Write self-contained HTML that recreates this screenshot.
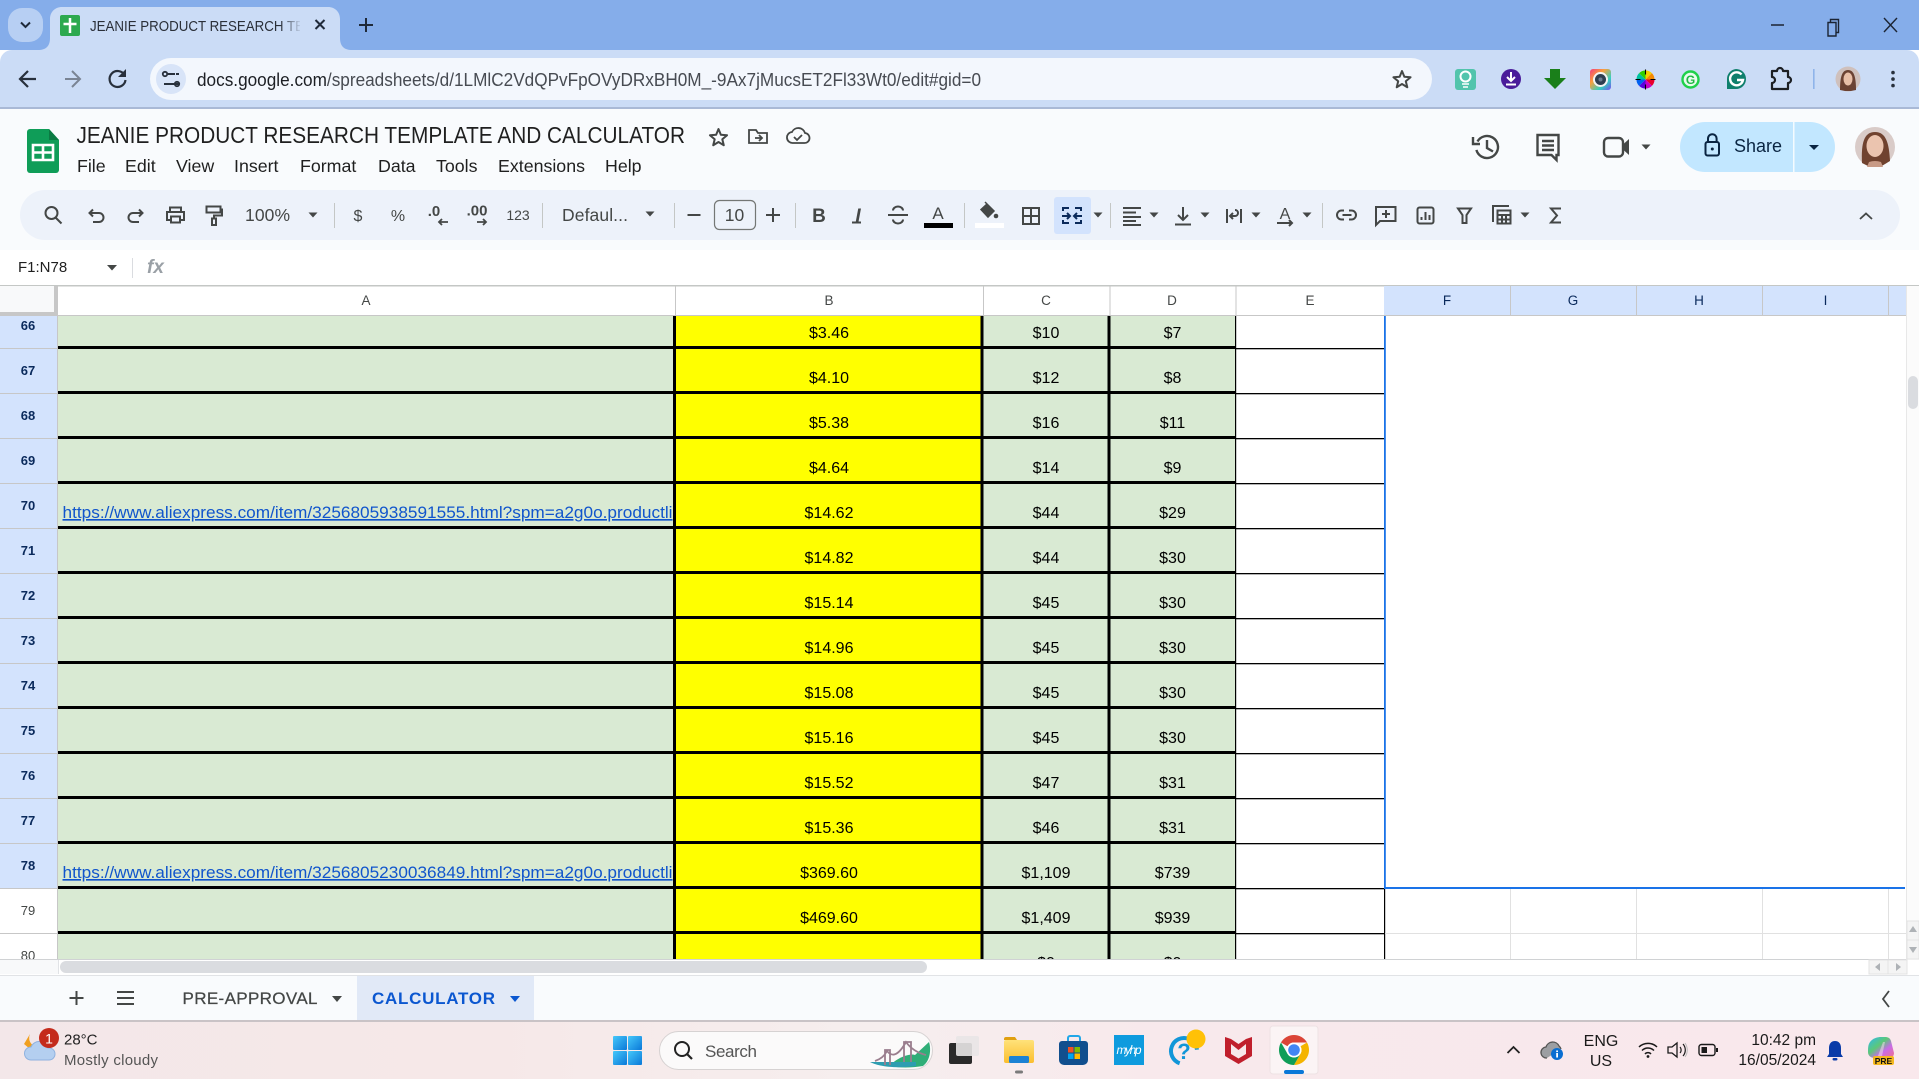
<!DOCTYPE html>
<html lang="en"><head><meta charset="utf-8"><title>JEANIE PRODUCT RESEARCH TEMPLATE AND CALCULATOR</title>
<style>
html,body{margin:0;padding:0;width:1919px;height:1079px;overflow:hidden;background:#fff}
#p{position:relative;width:1919px;height:1079px;overflow:hidden;font-family:"Liberation Sans",sans-serif}
#p>div{position:absolute}
svg{position:absolute;left:0;top:0}
text{font-family:"Liberation Sans",sans-serif}
</style></head><body><div id="p">
<div style="left:0;top:0;width:1919px;height:50px;background:#85ADEA"></div>
<div style="left:0;top:50px;width:1919px;height:58px;background:#CBDCF6;border-radius:12px 12px 0 0"></div>
<div style="left:0;top:107px;width:1919px;height:2px;background:#A9B9D6"></div>
<div style="left:150px;top:58px;width:1282px;height:42px;background:#F3F7FD;border-radius:21px"></div>
<div style="left:0;top:109px;width:1919px;height:141px;background:#F9FBFD"></div>
<div style="left:20px;top:190px;width:1880px;height:50px;background:#EDF2FA;border-radius:25px"></div>
<div style="left:0;top:250px;width:1919px;height:35px;background:#fff"></div>
<div style="left:0;top:975px;width:1919px;height:45px;background:#F9FBFD;border-top:1px solid #E1E3E6;box-sizing:border-box"></div>
<div style="left:0;top:1020px;width:1919px;height:59px;background:linear-gradient(90deg,#F3E7E9 0%,#F6E8E8 25%,#F6EEEE 45%,#F8E9EC 60%,#F9E8EC 100%);border-top:2px solid #C9C3C6;box-sizing:border-box"></div>
<svg width="1919" height="1079" viewBox="0 0 1919 1079">
<defs>
<clipPath id="grid"><rect x="0" y="316" width="1906" height="643"/></clipPath>
<clipPath id="tabc"><rect x="88" y="10" width="212" height="30"/></clipPath>
<linearGradient id="fade" x1="0" x2="1"><stop offset="0" stop-color="#CBDCF6" stop-opacity="0"/><stop offset="1" stop-color="#CBDCF6"/></linearGradient>
<linearGradient id="ring" x1="0" x2="1" y1="0" y2="1"><stop offset="0" stop-color="#F43C7E"/><stop offset=".35" stop-color="#F9A03C"/><stop offset=".7" stop-color="#35D0C0"/><stop offset="1" stop-color="#7A4CF0"/></linearGradient>
<linearGradient id="win" x1="0" x2="1" y1="0" y2="1"><stop offset="0" stop-color="#45C8FA"/><stop offset="1" stop-color="#0A78D8"/></linearGradient>
<linearGradient id="folder" x1="0" x2="0" y1="0" y2="1"><stop offset="0" stop-color="#FFE27A"/><stop offset="1" stop-color="#FBBE2E"/></linearGradient>
<linearGradient id="cop" x1="0" x2="1" y1="0" y2="1"><stop offset="0" stop-color="#2FB8F0"/><stop offset=".4" stop-color="#5CC878"/><stop offset=".65" stop-color="#C86CE8"/><stop offset="1" stop-color="#F0708C"/></linearGradient>
<polygon id="star" points="0,-9 2.35,-3.24 8.56,-2.78 3.8,1.24 5.29,7.28 0,4 -5.29,7.28 -3.8,1.24 -8.56,-2.78 -2.35,-3.24" fill="none" stroke="#444746" stroke-width="2" stroke-linejoin="round"/>
<polygon id="tri" points="-4.5,-2.5 4.5,-2.5 0,2.5" fill="#444746"/>
</defs>

<!-- tab strip -->
<rect x="8" y="8" width="35" height="34" rx="14" fill="#B7CFF3"/>
<path d="M21 22.5l4.5 4.5 4.5-4.5" fill="none" stroke="#1F2A3A" stroke-width="2"/>
<path d="M38 50c8 0 12-4 12-12V19c0-7 5-12 12-12h266c7 0 12 5 12 12v19c0 8 4 12 12 12z" fill="#CBDCF6"/>
<rect x="60" y="15" width="20" height="21" rx="2" fill="#2DA94F"/>
<path d="M70 18v15M63.5 24h13" stroke="#fff" stroke-width="2.5"/>
<text x="90" y="31" font-size="15" fill="#2A2F38" textLength="214" lengthAdjust="spacingAndGlyphs" clip-path="url(#tabc)">JEANIE PRODUCT RESEARCH TE</text>
<rect x="280" y="12" width="22" height="26" fill="url(#fade)"/>
<path d="M315.5 20l9 9M324.5 20l-9 9" stroke="#1F2A3A" stroke-width="2"/>
<path d="M366 18v14M359 25h14" stroke="#1F2A3A" stroke-width="2"/>
<path d="M1771 25h13" stroke="#1B2433" stroke-width="1.5"/>
<path d="M1828 22.500h8v13.500h-8zM1830.500 22v-2.500h8v13h-2.500" fill="none" stroke="#1B2433" stroke-width="1.400"/>
<path d="M1884 18l13 14M1897 18l-13 14" stroke="#1B2433" stroke-width="1.4"/>

<!-- nav -->
<path d="M36 79H21M28 71l-8 8 8 8" fill="none" stroke="#28303C" stroke-width="2.2"/>
<path d="M65 79h14M72 71l8 8-8 8" fill="none" stroke="#7A8494" stroke-width="2"/>
<path d="M124.5 75a8 8 0 1 0 1 5" fill="none" stroke="#28303C" stroke-width="2.2"/><path d="M126 69v8h-8z" fill="#28303C"/>
<circle cx="171" cy="79" r="15" fill="#D8E4F8"/>
<path d="M167 74h8M171 84h8" stroke="#28303C" stroke-width="2"/><circle cx="165" cy="74" r="2.2" fill="none" stroke="#28303C" stroke-width="1.8"/><circle cx="177" cy="84" r="2.2" fill="none" stroke="#28303C" stroke-width="1.8"/><path d="M164 84h7M176 74h3" stroke="#28303C" stroke-width="2"/>
<text x="197" y="86" font-size="18" fill="#474B52" textLength="784" lengthAdjust="spacingAndGlyphs"><tspan fill="#1C1F24">docs.google.com</tspan>/spreadsheets/d/1LMlC2VdQPvFpOVyDRxBH0M_-9Ax7jMucsET2Fl33Wt0/edit#gid=0</text>
<use href="#star" x="1402" y="80"/>

<!-- extensions -->
<rect x="1455" y="69" width="21" height="21" rx="3" fill="#52C4AC"/><circle cx="1465.5" cy="76.5" r="5" fill="none" stroke="#fff" stroke-width="2"/><path d="M1462 84h7M1463 87h5" stroke="#fff" stroke-width="1.4"/>
<circle cx="1511" cy="79" r="10" fill="#4A1C9A"/><path d="M1511 72v8M1507 77l4 4 4-4M1506 84.5h10" stroke="#fff" stroke-width="2" fill="none"/>
<path d="M1550 69h10v9h6l-11 11-11-11h6z" fill="#1A7F1A"/>
<rect x="1590" y="69" width="21" height="21" rx="3" fill="url(#ring)"/><circle cx="1600.5" cy="79.5" r="7.5" fill="#F4F4F4"/><circle cx="1600.5" cy="79.5" r="5.5" fill="#2E3E50"/><circle cx="1600.5" cy="79.5" r="2" fill="#6B7C90"/>
<g transform="translate(1645.5 79.5)"><path d="M0 0V-9A9 9 0 0 1 6.4-6.4z" fill="#F5D000"/><path d="M0 0L6.4-6.4A9 9 0 0 1 9 0z" fill="#F58A00"/><path d="M0 0H9A9 9 0 0 1 6.4 6.4z" fill="#E8002C"/><path d="M0 0L6.4 6.4A9 9 0 0 1 0 9z" fill="#C800C8"/><path d="M0 0V9A9 9 0 0 1-6.4 6.4z" fill="#5A00E0"/><path d="M0 0L-6.4 6.4A9 9 0 0 1-9 0z" fill="#0060F0"/><path d="M0 0H-9A9 9 0 0 1-6.4-6.4z" fill="#00C0A0"/><path d="M0 0L-6.4-6.4A9 9 0 0 1 0-9z" fill="#30D000"/><path d="M0-10v5M0 5v5M-10 0h5M5 0h5" stroke="#000" stroke-width="1.1"/></g>
<circle cx="1690.5" cy="79.5" r="8" fill="#E9FBEE" stroke="#1FD14A" stroke-width="2.4"/><text x="1690.5" y="84" font-size="12" font-weight="700" fill="#1FB844" text-anchor="middle">G</text>
<path d="M1736 69a10 10 0 1 1 0 20h-9v-10a10 10 0 0 1 9-10z" fill="#0F7F6C"/><path d="M1741.5 74.5a6.5 6.5 0 1 0 1.5 5.5h-6" fill="none" stroke="#fff" stroke-width="2.4"/>
<path d="M1772 71h5a3 3 0 0 1 6 0h5v6a2.5 2.5 0 0 1 0 6v6h-16v-6a2.6 2.6 0 0 0 0-6z" fill="none" stroke="#1C1F24" stroke-width="2.2" stroke-linejoin="round"/>
<rect x="1813" y="69" width="1.6" height="20" fill="#8FB4EA"/>
<g transform="translate(1848 79)"><circle r="12.5" fill="#CFC0BC"/><path d="M-8 11C-8-2-6-9 0-9S8-2 8 11L3 12H-3Z" fill="#6B4233"/><ellipse cy="0" rx="4.500" ry="6.500" fill="#E8BFA8"/></g>
<path d="M1893 72.5v.1M1893 79v.1M1893 85.5v.1" stroke="#28303C" stroke-width="3.6" stroke-linecap="round"/>

<!-- sheets header -->
<path d="M30 129h19l10 11v30a3 3 0 0 1-3 3H30a3 3 0 0 1-3-3v-38a3 3 0 0 1 3-3z" fill="#0F9D58"/><path d="M49 129l10 11H49z" fill="#0B7A43"/>
<path d="M33 145h20v15H33zM43 145v15M33 152.500h20" fill="none" stroke="#fff" stroke-width="2.6"/>
<text x="76.500" y="143" font-size="23" fill="#1F1F1F" textLength="608.500" lengthAdjust="spacingAndGlyphs">JEANIE PRODUCT RESEARCH TEMPLATE AND CALCULATOR</text>
<g font-size="17.800" fill="#1F1F1F"><text x="77" y="172">File</text><text x="125" y="172">Edit</text><text x="176" y="172">View</text><text x="234" y="172">Insert</text><text x="300" y="172">Format</text><text x="378" y="172">Data</text><text x="436" y="172">Tools</text><text x="498" y="172">Extensions</text><text x="605" y="172">Help</text></g>
<use href="#star" x="718.500" y="138"/>
<path d="M749 130h7l2 3h9v10h-18zM755 138h7M759 135l3 3-3 3" fill="none" stroke="#444746" stroke-width="1.8"/>
<path d="M793 143h11a5 5 0 0 0 1-10 7 7 0 0 0-13-1 5.500 5.500 0 0 0 1 11zM794 137l3 3 5-5" fill="none" stroke="#444746" stroke-width="1.8"/>
<circle cx="1487" cy="147" r="11" fill="none" stroke="#444746" stroke-width="2.4" stroke-dasharray="60 10" transform="rotate(-150 1487 147)"/><path d="M1487 140v8l6 3.500M1473 137v7h7" fill="none" stroke="#444746" stroke-width="2.400"/>
<path d="M1537.500 135h21v20h-2v5l-5-5h-14zM1542 141h12M1542 145.500h12M1542 150h12" fill="none" stroke="#444746" stroke-width="2.400"/>
<rect x="1604" y="138" width="19" height="18.500" rx="4" fill="none" stroke="#444746" stroke-width="2.400"/><path d="M1623 144.500l6-5.500v16l-6-5.500z" fill="#444746"/>
<use href="#tri" x="1646" y="147"/>
<rect x="1680" y="122" width="155" height="50" rx="25" fill="#C2E7FF"/><rect x="1793" y="122" width="1.500" height="50" fill="#F4FBFF"/>
<rect x="1705.500" y="142" width="13.500" height="13.500" rx="2" fill="none" stroke="#0A2542" stroke-width="2"/><path d="M1708 142v-3.500a4.300 4.300 0 0 1 8.600 0v3.500" fill="none" stroke="#0A2542" stroke-width="2"/><circle cx="1712.300" cy="149" r="1.500" fill="#0A2542"/>
<text x="1734" y="152" font-size="18" fill="#0A2542" textLength="48">Share</text>
<polygon points="1809,145 1819,145 1814,150" fill="#0A2542"/>
<g transform="translate(1875 147)"><circle r="20" fill="#D9CBC8"/><path d="M-13 16C-14-4-11-15 0-15S14-4 15 14L5 20H-5Z" fill="#70422F"/><ellipse cy="-1" rx="8.500" ry="11" fill="#EBC4AF"/><path d="M-6 15a12 7 0 0 1 12 0l2 5H-8z" fill="#C89A86"/></g>

<!-- toolbar -->
<g fill="none" stroke="#444746" stroke-width="2">
<circle cx="51.500" cy="213" r="6"/><path d="M55.500 217.500l6 6"/>
<path d="M93 209.500L89.500 213l3.500 3.500M90 213h9a4.500 4.500 0 0 1 0 9h-6"/>
<path d="M139 209.500l3.500 3.500-3.500 3.500M142 213h-9a4.500 4.500 0 0 0 0 9h6"/>
<path d="M170 212v-4.500h11v4.500M171 220h-4v-8h17v8h-4M171 216.500h9v6h-9z"/>
<path d="M206.500 206.500h14v6h-14zM220.500 209.500h1.500v6h-8v3M212 218.500h4v6.500h-4z"/>
<path d="M687.500 215h13M773 208v14M766 215h14M888 215h20M893 210.500a5 4 0 0 1 10 0M893 219.500a5 4 0 0 0 10 0"/>
<rect x="1023" y="208" width="16" height="16"/><path d="M1031 208v16M1023 216h16"/>
<path d="M1123 208h18M1123 212.500h13M1123 217h18M1123 221h13M1123 225h18"/>
<path d="M1183 207v13M1178 215l5 5 5-5M1175 224.500h16"/>
<path d="M1227 209v14M1241 209v14M1230 216h5a3 3 0 0 0 0-6M1233 213l-3 3 3 3"/>
<path d="M1277 223h15M1289 220l3 3-3 3"/>
<path d="M1344 210.500h-2.500a4.500 4.500 0 0 0 0 9h2.500M1349 210.500h2.500a4.500 4.500 0 0 1 0 9H1349M1342.500 215h9"/>
<path d="M1376 207h19.500v14H1380l-4 4zM1386 210v8M1382 214h8"/>
<rect x="1417.500" y="207.500" width="16" height="16" rx="2"/><path d="M1421.500 217v3M1425.500 212v8M1429.500 215v5"/>
<path d="M1458 208.500h13l-4.500 6.500v8h-4v-8z"/>
<path d="M1493 222v-16h16M1497.500 210.500h13v13h-13zM1497.500 215h13M1497.500 219.500h13M1502 215v8M1506 215v8"/>
<path d="M1561 208.500h-10l6 7-6 7h10"/>
<path d="M1860 219l6-5.500 6 5.500" stroke-width="1.800"/>
</g>
<g font-size="17.500" fill="#444746"><text x="245" y="221" textLength="45">100%</text><text x="358" y="221" text-anchor="middle" font-size="16">$</text><text x="398" y="221" text-anchor="middle" font-size="16">%</text><text x="562" y="221" textLength="66">Defaul...</text><text x="734.500" y="221" text-anchor="middle">10</text>
<text x="434" y="216" text-anchor="middle" font-size="15" font-weight="700">.0</text><text x="477" y="215.500" text-anchor="middle" font-size="15" font-weight="700">.00</text><text x="518" y="220" text-anchor="middle" font-size="14">123</text>
<text x="819" y="222" text-anchor="middle" font-size="19" font-weight="700">B</text><text x="858" y="222" text-anchor="middle" font-size="19" font-weight="700" font-style="italic">I</text><text x="938" y="219" text-anchor="middle" font-size="17">A</text><text x="1285" y="219" text-anchor="middle" font-size="16">A</text></g>
<path d="M852 222.500h9" stroke="#444746" stroke-width="2"/>
<path d="M448 222h-9M442 219l-3 3 3 3M477 222h9M483 219l3 3-3 3" fill="none" stroke="#444746" stroke-width="1.800"/>
<rect x="714.500" y="200.500" width="41" height="29" rx="5" fill="none" stroke="#747775" stroke-width="1.200"/>
<g fill="#C4C7C5"><rect x="334" y="203" width="1" height="25"/><rect x="542" y="203" width="1" height="25"/><rect x="674" y="203" width="1" height="25"/><rect x="795" y="203" width="1" height="25"/><rect x="964" y="203" width="1" height="25"/><rect x="1110" y="203" width="1" height="25"/><rect x="1322" y="203" width="1" height="25"/></g>
<rect x="924" y="223" width="29" height="5" fill="#000"/>
<path d="M985 202l2 2M981 209.500l6-5.500 7 7-6 6z" fill="#444746" stroke="#444746" stroke-width="1.500"/><circle cx="996" cy="216" r="2.300" fill="#444746"/>
<rect x="975" y="223" width="29" height="5" fill="#fff"/>
<rect x="1054" y="197" width="37" height="37" rx="3" fill="#D3E3FD"/>
<path d="M1063 211v-3h6M1081 211v-3h-6M1063 220v3h6M1081 220v3h-6M1062 216h8M1067 213l3 3-3 3M1082 216h-8M1077 213l-3 3 3 3" fill="none" stroke="#0B2A5B" stroke-width="2"/>
<use href="#tri" x="313" y="215"/><use href="#tri" x="650" y="214"/><use href="#tri" x="1098" y="215"/><use href="#tri" x="1154" y="215"/><use href="#tri" x="1205" y="215"/><use href="#tri" x="1256" y="215"/><use href="#tri" x="1307" y="215"/><use href="#tri" x="1525" y="215"/>

<!-- name box -->
<text x="18" y="272" font-size="15" fill="#1F1F1F">F1:N78</text>
<polygon points="107,265 117,265 112,270.500" fill="#444746"/>
<rect x="132" y="258" width="1" height="20" fill="#DADCE0"/>
<text x="147" y="273" font-family="Liberation Serif" font-size="19" font-style="italic" fill="#9AA0A6" font-weight="700">fx</text>

<!-- column headers -->
<rect x="0" y="285" width="1919" height="1.500" fill="#C4C7C5"/>
<rect x="0" y="286" width="54" height="26" fill="#F8F9FA"/><rect x="54" y="286" width="4" height="30" fill="#C7C7C7"/><rect x="0" y="312" width="58" height="4" fill="#C7C7C7"/>
<rect x="1384" y="286" width="522" height="29" fill="#D3E3FD"/>
<rect x="58" y="315" width="1848" height="1" fill="#C7C7C7"/>
<g fill="#C7C7C7"><rect x="675" y="286" width="1" height="29"/><rect x="983" y="286" width="1" height="29"/><rect x="1109.500" y="286" width="1" height="29"/><rect x="1235.500" y="286" width="1" height="29"/><rect x="1510" y="286" width="1" height="29"/><rect x="1636" y="286" width="1" height="29"/><rect x="1762" y="286" width="1" height="29"/><rect x="1888" y="286" width="1" height="29"/></g>
<g font-size="13.500" fill="#444746" text-anchor="middle"><text x="366" y="305">A</text><text x="829" y="305">B</text><text x="1046" y="305">C</text><text x="1172" y="305">D</text><text x="1310" y="305">E</text></g>
<g font-size="13.500" fill="#0A2A5C" text-anchor="middle"><text x="1447" y="305">F</text><text x="1573" y="305">G</text><text x="1699" y="305">H</text><text x="1825.500" y="305">I</text></g>

<!-- grid -->
<g clip-path="url(#grid)">
<rect x="0" y="316" width="58" height="573" fill="#D3E3FD"/>
<rect x="0" y="889" width="58" height="70" fill="#fff"/>
<rect x="57" y="316" width="1" height="643" fill="#C7C7C7"/>
<g fill="#C7C7C7"><rect x="0" y="348" width="58" height="1"/><rect x="0" y="393" width="58" height="1"/><rect x="0" y="438" width="58" height="1"/><rect x="0" y="483" width="58" height="1"/><rect x="0" y="528" width="58" height="1"/><rect x="0" y="573" width="58" height="1"/><rect x="0" y="618" width="58" height="1"/><rect x="0" y="663" width="58" height="1"/><rect x="0" y="708" width="58" height="1"/><rect x="0" y="753" width="58" height="1"/><rect x="0" y="798" width="58" height="1"/><rect x="0" y="843" width="58" height="1"/><rect x="0" y="888" width="58" height="1"/><rect x="0" y="933" width="58" height="1"/></g>
<rect x="58" y="316" width="615" height="643" fill="#D9EAD3"/>
<rect x="676" y="316" width="305" height="643" fill="#FFFF00"/>
<rect x="983" y="316" width="252.500" height="643" fill="#D9EAD3"/>
<g fill="#000"><rect x="1236" y="348" width="148" height="1.300"/><rect x="1236" y="393" width="148" height="1.300"/><rect x="1236" y="438" width="148" height="1.300"/><rect x="1236" y="483" width="148" height="1.300"/><rect x="1236" y="528" width="148" height="1.300"/><rect x="1236" y="573" width="148" height="1.300"/><rect x="1236" y="618" width="148" height="1.300"/><rect x="1236" y="663" width="148" height="1.300"/><rect x="1236" y="708" width="148" height="1.300"/><rect x="1236" y="753" width="148" height="1.300"/><rect x="1236" y="798" width="148" height="1.300"/><rect x="1236" y="843" width="148" height="1.300"/><rect x="1236" y="888" width="148" height="1.300"/><rect x="1236" y="933" width="148" height="1.300"/>
<rect x="1235" y="316" width="1.200" height="643"/><rect x="1384" y="889" width="1.200" height="70"/></g>
<g fill="#E1E1E1"><rect x="1385" y="933" width="521" height="1"/><rect x="1510" y="889" width="1" height="70"/><rect x="1636" y="889" width="1" height="70"/><rect x="1762" y="889" width="1" height="70"/><rect x="1888" y="889" width="1" height="70"/></g>
<g fill="#000"><rect x="58" y="346" width="1177" height="3"/><rect x="58" y="391" width="1177" height="3"/><rect x="58" y="436" width="1177" height="3"/><rect x="58" y="481" width="1177" height="3"/><rect x="58" y="526" width="1177" height="3"/><rect x="58" y="571" width="1177" height="3"/><rect x="58" y="616" width="1177" height="3"/><rect x="58" y="661" width="1177" height="3"/><rect x="58" y="706" width="1177" height="3"/><rect x="58" y="751" width="1177" height="3"/><rect x="58" y="796" width="1177" height="3"/><rect x="58" y="841" width="1177" height="3"/><rect x="58" y="886" width="1177" height="3"/><rect x="58" y="931" width="1177" height="3"/>
<rect x="673" y="316" width="3" height="643"/><rect x="980.500" y="316" width="3" height="643"/><rect x="1107.500" y="316" width="3" height="643"/></g>
<rect x="1384" y="316" width="1.800" height="572" fill="#1A73E8"/><rect x="1384" y="887" width="521" height="2" fill="#1A73E8"/>
<g font-size="13" font-weight="700" fill="#0A2A5C" text-anchor="middle"><text x="28" y="330">66</text><text x="28" y="375">67</text><text x="28" y="420">68</text><text x="28" y="465">69</text><text x="28" y="510">70</text><text x="28" y="555">71</text><text x="28" y="600">72</text><text x="28" y="645">73</text><text x="28" y="690">74</text><text x="28" y="735">75</text><text x="28" y="780">76</text><text x="28" y="825">77</text><text x="28" y="870">78</text></g>
<g font-size="13" fill="#444746" text-anchor="middle"><text x="28" y="915">79</text><text x="28" y="960">80</text></g>
<text x="62.500" y="518" font-size="16.500" fill="#1155CC" text-decoration="underline" textLength="610" lengthAdjust="spacingAndGlyphs">https://www.aliexpress.com/item/3256805938591555.html?spm=a2g0o.productli</text>
<text x="62.500" y="878" font-size="16.500" fill="#1155CC" text-decoration="underline" textLength="610" lengthAdjust="spacingAndGlyphs">https://www.aliexpress.com/item/3256805230036849.html?spm=a2g0o.productli</text>
<g font-size="16" fill="#000" text-anchor="middle">
<text x="829" y="338">$3.46</text><text x="1046" y="338">$10</text><text x="1172.500" y="338">$7</text>
<text x="829" y="383">$4.10</text><text x="1046" y="383">$12</text><text x="1172.500" y="383">$8</text>
<text x="829" y="428">$5.38</text><text x="1046" y="428">$16</text><text x="1172.500" y="428">$11</text>
<text x="829" y="473">$4.64</text><text x="1046" y="473">$14</text><text x="1172.500" y="473">$9</text>
<text x="829" y="518">$14.62</text><text x="1046" y="518">$44</text><text x="1172.500" y="518">$29</text>
<text x="829" y="563">$14.82</text><text x="1046" y="563">$44</text><text x="1172.500" y="563">$30</text>
<text x="829" y="608">$15.14</text><text x="1046" y="608">$45</text><text x="1172.500" y="608">$30</text>
<text x="829" y="653">$14.96</text><text x="1046" y="653">$45</text><text x="1172.500" y="653">$30</text>
<text x="829" y="698">$15.08</text><text x="1046" y="698">$45</text><text x="1172.500" y="698">$30</text>
<text x="829" y="743">$15.16</text><text x="1046" y="743">$45</text><text x="1172.500" y="743">$30</text>
<text x="829" y="788">$15.52</text><text x="1046" y="788">$47</text><text x="1172.500" y="788">$31</text>
<text x="829" y="833">$15.36</text><text x="1046" y="833">$46</text><text x="1172.500" y="833">$31</text>
<text x="829" y="878">$369.60</text><text x="1046" y="878">$1,109</text><text x="1172.500" y="878">$739</text>
<text x="829" y="923">$469.60</text><text x="1046" y="923">$1,409</text><text x="1172.500" y="923">$939</text>
<text x="1046" y="968">$0</text><text x="1172.500" y="968">$0</text>
</g>
</g>

<!-- scrollbars -->
<rect x="0" y="959" width="1919" height="1" fill="#D0D2D4"/>
<rect x="0" y="960" width="58" height="14" fill="#F8F9FA"/><rect x="58" y="960" width="1" height="14" fill="#E1E3E6"/>
<rect x="60" y="961" width="867" height="12" rx="6" fill="#DADCE0"/>
<rect x="1906" y="286" width="13" height="674" fill="#FBFBFB"/><rect x="1906" y="286" width="1" height="674" fill="#E8E8E8"/>
<rect x="1908" y="376" width="10" height="33" rx="5" fill="#DADCE0"/>
<rect x="1907" y="921" width="12" height="19" fill="#F4F4F4" stroke="#E3E3E3"/><rect x="1907" y="940" width="12" height="19" fill="#F4F4F4" stroke="#E3E3E3"/>
<polygon points="1913,926 1917,932 1909,932" fill="#AEB2B6"/><polygon points="1913,953 1917,947 1909,947" fill="#AEB2B6"/>
<rect x="1869" y="960" width="19" height="14" fill="#F4F4F4" stroke="#E3E3E3"/><rect x="1888" y="960" width="19" height="14" fill="#F4F4F4" stroke="#E3E3E3"/>
<polygon points="1875,967 1880,963 1880,971" fill="#AEB2B6"/><polygon points="1901,967 1896,963 1896,971" fill="#AEB2B6"/>

<!-- sheet tabs -->
<path d="M76.500 991v14M69.500 998h14" stroke="#444746" stroke-width="2"/>
<path d="M117 992h17M117 998h17M117 1004h17" stroke="#444746" stroke-width="2"/>
<text x="182.500" y="1004" font-size="17" fill="#444746" textLength="135" font-weight="400" stroke="#444746" stroke-width=".25">PRE-APPROVAL</text>
<polygon points="332,996 342,996 337,1002" fill="#444746"/>
<rect x="357" y="976" width="177" height="44" fill="#E1E9F7"/>
<text x="372" y="1004" font-size="17" font-weight="700" fill="#0B57D0" textLength="123">CALCULATOR</text>
<polygon points="510,996 520,996 515,1002" fill="#0B57D0"/>
<path d="M1889 991l-6 8 6 8" fill="none" stroke="#444746" stroke-width="1.800"/>

<!-- taskbar left -->
<path d="M30 1034a9 9 0 0 0 12 12l-12 3-6-5z" fill="#F0A020"/>
<path d="M31 1060a6.500 6.500 0 0 1 0-13 9 9 0 0 1 17 1 6 6 0 0 1 7 6 6 6 0 0 1-6 6z" fill="#B4CFF0" stroke="#8FB2E0" stroke-width="1"/>
<circle cx="49" cy="1038" r="10" fill="#C42B1C"/><text x="49" y="1043.500" font-size="14" fill="#fff" text-anchor="middle">1</text>
<text x="64" y="1044.500" font-size="15" fill="#1F1F1F">28°C</text>
<text x="64" y="1065" font-size="15" fill="#555" textLength="94">Mostly cloudy</text>
<!-- start -->
<g fill="url(#win)"><rect x="613" y="1036" width="14" height="14" rx="1"/><rect x="628" y="1036" width="14" height="14" rx="1"/><rect x="613" y="1051" width="14" height="14" rx="1"/><rect x="628" y="1051" width="14" height="14" rx="1"/></g>
<rect x="659.500" y="1031.500" width="273" height="38" rx="19" fill="#FBFAFA" stroke="#D6D2D2"/>
<circle cx="682" cy="1049" r="7" fill="none" stroke="#222" stroke-width="2"/><path d="M687 1054l5 5" stroke="#222" stroke-width="2.200"/>
<text x="705" y="1057" font-size="17" fill="#555" textLength="52">Search</text>
<!-- bridge -->
<path d="M890 1066c6-8 20-13 25-11l14-13c2 6 2 18-6 24-12 2-24 2-33 0z" fill="#30AE78"/>
<path d="M870 1062h46v4c-15 2-34 2-46-4z" fill="#2E9DB0"/>
<path d="M885 1065v-15h5v15M904 1062v-20h7v20M875 1061c6-2 10-6 12-10 4 5 10 7 19-9 5 7 12 11 20 13" fill="none" stroke="#9A7E8E" stroke-width="1.800"/>
<!-- task view -->
<rect x="949" y="1043" width="23" height="21" rx="2" fill="#2A2A2A"/><rect x="956" y="1036" width="23" height="20" rx="2" fill="#E8E6E6" opacity=".9"/>
<!-- explorer -->
<path d="M1004 1039a2 2 0 0 1 2-2h9l2 3h-13z" fill="#E0A010"/><rect x="1004" y="1040" width="30" height="23" rx="2" fill="url(#folder)"/><rect x="1009" y="1056" width="20" height="7" rx="1.500" fill="#1C82D4"/>
<rect x="1015" y="1070.500" width="8" height="3" rx="1.500" fill="#7A7A7A"/>
<!-- store -->
<path d="M1068 1042v-4a2 2 0 0 1 2-2h8a2 2 0 0 1 2 2v4" fill="none" stroke="#22A7E8" stroke-width="2"/>
<path d="M1059 1044a3 3 0 0 1 3-3h23a3 3 0 0 1 3 3v16a5 5 0 0 1-5 5h-19a5 5 0 0 1-5-5z" fill="#114F8E"/>
<rect x="1068" y="1047" width="5.500" height="5.500" fill="#F25022"/><rect x="1074.500" y="1047" width="5.500" height="5.500" fill="#7FBA00"/><rect x="1068" y="1053.500" width="5.500" height="5.500" fill="#00A4EF"/><rect x="1074.500" y="1053.500" width="5.500" height="5.500" fill="#FFB900"/>
<!-- myhp -->
<rect x="1114" y="1035" width="30" height="30" fill="#0E9BDE"/><text x="1129" y="1054" font-size="12" font-style="italic" fill="#fff" text-anchor="middle" textLength="25">myhp</text>
<!-- help -->
<circle cx="1184" cy="1051" r="13" fill="none" stroke="#1296D8" stroke-width="4" stroke-dasharray="55 26" transform="rotate(110 1184 1051)"/><text x="1184" y="1059" font-size="22" font-weight="700" fill="#1296D8" text-anchor="middle">?</text><circle cx="1196" cy="1039" r="9.500" fill="#FFC107"/>
<!-- mcafee -->
<path d="M1225 1037l6 2 7.500 5 7.500-5 6-2v19l-13.500 8-13.500-8z" fill="#C01F2C"/><path d="M1231 1044v10l7.500 4.500 7.500-4.500v-10l-7.500 6z" fill="#F7E7EA"/>
<!-- chrome -->
<rect x="1270" y="1026" width="48" height="48" rx="3" fill="#FBF4F5" stroke="#EEE2E4"/>
<g transform="translate(1294 1050)"><path d="M0-15A15 15 0 0 1 13 -7.500H0A7.500 7.500 0 0 0-6.500-3.700L-13-7.500A15 15 0 0 1 0-15z" fill="#DB4437"/><path d="M13-7.500A15 15 0 0 1 0 15L6.500 3.700A7.500 7.500 0 0 0 6.500-3.700z" fill="#F4B400"/><path d="M-13-7.500A15 15 0 0 0 0 15L6.500 3.700A7.500 7.500 0 0 1-6.500 3.700z" fill="#0F9D58"/><circle r="7.500" fill="#fff"/><circle r="5.800" fill="#4285F4"/></g>
<rect x="1284" y="1070" width="20" height="4" rx="2" fill="#0A78D8"/>
<!-- tray -->
<path d="M1507.500 1053l6-6 6 6" fill="none" stroke="#222" stroke-width="1.800"/>
<path d="M1547 1058a5.500 5.500 0 0 1-1-11 7 7 0 0 1 13-1 6 6 0 0 1 2 3" fill="#9C9EA2" stroke="#555" stroke-width="1.300"/>
<circle cx="1557" cy="1054" r="6" fill="#0A6ED1"/><rect x="1556.200" y="1053" width="1.800" height="4.500" fill="#fff"/><rect x="1556.200" y="1050.500" width="1.800" height="1.600" fill="#fff"/>
<g font-size="16" fill="#1A1A1A" text-anchor="middle"><text x="1601" y="1046">ENG</text><text x="1601" y="1066">US</text></g>
<path d="M1639 1047a13 13 0 0 1 18 0M1642 1050.500a8.500 8.500 0 0 1 12 0M1645 1054a4 4 0 0 1 6 0" fill="none" stroke="#1A1A1A" stroke-width="1.500"/><circle cx="1648" cy="1056.500" r="1.400" fill="#1A1A1A"/>
<path d="M1668 1047v6h4l5 4v-14l-5 4z" fill="none" stroke="#1A1A1A" stroke-width="1.300"/><path d="M1680 1047a4.500 4.500 0 0 1 0 6M1683 1044a9 9 0 0 1 0 12" fill="none" stroke="#1A1A1A" stroke-width="1.200"/><path d="M1685 1043a12 12 0 0 1 0 14" fill="none" stroke="#BBB" stroke-width="1"/>
<rect x="1699" y="1044.500" width="16" height="11" rx="2.500" fill="none" stroke="#1A1A1A" stroke-width="1.400"/><rect x="1701.500" y="1047" width="5.500" height="6" fill="#1A1A1A"/><rect x="1716" y="1048" width="2" height="4" fill="#1A1A1A"/>
<g font-size="15.500" fill="#1A1A1A" text-anchor="end"><text x="1816" y="1045">10:42 pm</text><text x="1816" y="1065">16/05/2024</text></g>
<path d="M1835 1041c-4 0-6 3-6 7v6l-2 3h16l-2-3v-6c0-4-2-7-6-7z" fill="#0A3BA8"/><rect x="1832.500" y="1058" width="5" height="2.500" rx="1.200" fill="#0A3BA8"/>
<path d="M1870 1042c3-4 8-5 11-5h4c3 0 5 1 6 4l3 12c0 3-2 5-5 5h-14c-4 0-7-2-7-6 0-4 0-7 2-10z" fill="url(#cop)"/><path d="M1878 1056l5-14h2l-3 14z" fill="#F5E5EA" opacity=".5"/>
<rect x="1873" y="1056" width="21" height="9" rx="2" fill="#F4B820"/><text x="1883.500" y="1064" font-size="8.500" font-weight="700" fill="#111" text-anchor="middle">PRE</text>
</svg>
</div></body></html>
